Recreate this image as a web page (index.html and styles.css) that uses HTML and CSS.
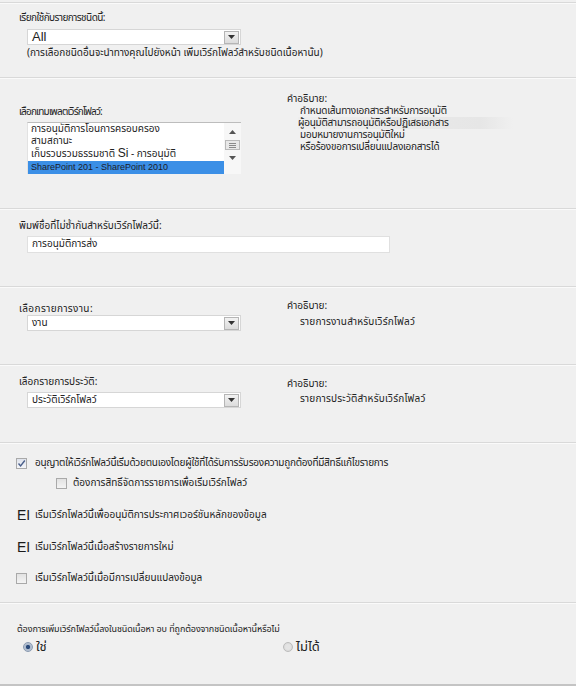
FILE: index.html
```html
<!DOCTYPE html>
<html lang="th">
<head>
<meta charset="utf-8">
<title>เพิ่มเวิร์กโฟลว์</title>
<link rel="stylesheet" href="styles.css">
</head>
<body>
<div class="page">
  <section class="sec s1">
    <div class="label narrow">เรียกใช้กับรายการชนิดนี้:</div>
    <div class="select">
      <span class="sel-text latin">All</span>
      <span class="arrow"><svg width="7" height="4" viewBox="0 0 7 4"><path d="M0 0H7L3.5 4Z" fill="#333"/></svg></span>
    </div>
    <div class="note">(การเลือกชนิดอื่นจะนำทางคุณไปยังหน้า เพิ่มเวิร์กโฟลว์สำหรับชนิดเนื้อหานั้น)</div>
  </section>

  <section class="sec s2 cols">
    <div class="left l2">
      <div class="label narrower">เลือกเทมเพลตเวิร์กโฟลว์:</div>
      <div class="listbox">
        <div class="items">
          <div class="item">การอนุมัติการโอนการครอบครอง</div>
          <div class="item">สามสถานะ</div>
          <div class="item i3">เก็บรวบรวมธรรมชาติ <span class="latin big">Si</span> - การอนุมัติ</div>
          <div class="item selected">SharePoint 201 - SharePoint 2010</div>
        </div>
        <div class="scroll">
          <svg width="7" height="4" viewBox="0 0 7 4"><path d="M3.5 0L7 4H0Z" fill="#555"/></svg>
          <span class="thumb"><i></i><i></i><i></i></span>
          <svg width="7" height="4" viewBox="0 0 7 4"><path d="M0 0H7L3.5 4Z" fill="#555"/></svg>
        </div>
      </div>
    </div>
    <div class="right r2">
      <div class="desc-title">คำอธิบาย:</div>
      <div class="desc tight">
        <div>กำหนดเส้นทางเอกสารสำหรับการอนุมัติ</div>
        <div class="hl">ผู้อนุมัติสามารถอนุมัติหรือปฏิเสธเอกสาร</div>
        <div>มอบหมายงานการอนุมัติใหม่</div>
        <div>หรือร้องขอการเปลี่ยนแปลงเอกสารได้</div>
      </div>
    </div>
  </section>

  <section class="sec s3">
    <div class="label">พิมพ์ชื่อที่ไม่ซ้ำกันสำหรับเวิร์กโฟลว์นี้:</div>
    <div class="input">การอนุมัติการส่ง</div>
  </section>

  <section class="sec s4 cols">
    <div class="left l4">
      <div class="label wide">เลือกรายการงาน:</div>
      <div class="select">
        <span class="sel-text">งาน</span>
        <span class="arrow"><svg width="7" height="4" viewBox="0 0 7 4"><path d="M0 0H7L3.5 4Z" fill="#333"/></svg></span>
      </div>
    </div>
    <div class="right r4">
      <div class="desc-title">คำอธิบาย:</div>
      <div class="desc spaced">รายการงานสำหรับเวิร์กโฟลว์</div>
    </div>
  </section>

  <section class="sec s5 cols">
    <div class="left l5">
      <div class="label">เลือกรายการประวัติ:</div>
      <div class="select">
        <span class="sel-text">ประวัติเวิร์กโฟลว์</span>
        <span class="arrow"><svg width="7" height="4" viewBox="0 0 7 4"><path d="M0 0H7L3.5 4Z" fill="#333"/></svg></span>
      </div>
    </div>
    <div class="right r5">
      <div class="desc-title">คำอธิบาย:</div>
      <div class="desc spaced">รายการประวัติสำหรับเวิร์กโฟลว์</div>
    </div>
  </section>

  <section class="sec s6">
    <div class="row r-a">
      <span class="cb checked"><svg width="9" height="9" viewBox="0 0 9 9"><path d="M1.5 4.5L3.6 7L7.8 1.5" fill="none" stroke="#4a5f8a" stroke-width="1.4"/></svg></span>
      <span class="txt tight">อนุญาตให้เวิร์กโฟลว์นี้เริ่มด้วยตนเองโดยผู้ใช้ที่ได้รับการรับรองความถูกต้องที่มีสิทธิ์แก้ไขรายการ</span>
    </div>
    <div class="row r-b sub">
      <span class="cb"></span>
      <span class="txt">ต้องการสิทธิ์จัดการรายการเพื่อเริ่มเวิร์กโฟลว์</span>
    </div>
    <div class="row r-c">
      <span class="ei">EI</span>
      <span class="txt">เริ่มเวิร์กโฟลว์นี้เพื่ออนุมัติการประกาศเวอร์ชันหลักของข้อมูล</span>
    </div>
    <div class="row r-d">
      <span class="ei">EI</span>
      <span class="txt">เริ่มเวิร์กโฟลว์นี้เมื่อสร้างรายการใหม่</span>
    </div>
    <div class="row r-e">
      <span class="cb"></span>
      <span class="txt">เริ่มเวิร์กโฟลว์นี้เมื่อมีการเปลี่ยนแปลงข้อมูล</span>
    </div>
  </section>

  <section class="sec s7">
    <div class="question">ต้องการเพิ่มเวิร์กโฟลว์นี้ลงในชนิดเนื้อหา อบ ที่ถูกต้องจากชนิดเนื้อหานี้หรือไม่</div>
    <div class="radios">
      <label class="radio-opt"><span class="radio on"></span><span class="rtxt">ใช่</span></label>
      <label class="radio-opt"><span class="radio"></span><span class="rtxt">ไม่ได้</span></label>
    </div>
  </section>
</div>
</body>
</html>
```

FILE: styles.css
```css
* { box-sizing: border-box; }
html, body { margin: 0; padding: 0; }
body {
  background: #f0f0f0;
  font-family: "Noto Sans Thai", Tahoma, "Noto Sans", "DejaVu Sans", sans-serif;
  font-size: 10px;
  color: #222;
  width: 576px;
  height: 686px;
  overflow: hidden;
}
.page {
  padding-top: 2px;
  height: 686px;
  border-bottom: 2px solid #c4c4c4;
}
.sec {
  border-top: 1px solid #d9d9d9;
  box-shadow: inset 0 1px 0 #fafafa;
}
.s1 { height: 75px; padding: 8px 0 0 19px; }
.s2 { height: 131px; }
.s3 { height: 78px; padding: 10px 0 0 19px; }
.s4 { height: 78px; }
.s5 { height: 78px; }
.s6 { height: 160px; padding: 12px 0 0 16px; }
.s7 { height: 82px; padding: 19px 0 0 17px; }

.cols { display: grid; grid-template-columns: 287px 1fr; }
.left { padding-left: 19px; }
.l2 { padding-top: 28px; }
.r2 { padding-top: 15px; }
.l4 { padding-top: 16px; }
.r4 { padding-top: 13px; }
.l5 { padding-top: 11px; }
.r5 { padding-top: 13px; }

.label { line-height: 14px; height: 14px; white-space: nowrap; }
.cols .label { line-height: 12px; height: 12px; }
.s1 .label { margin-bottom: 4px; }
.l2 .label { margin-bottom: 4px; }
.l5 .label { margin-bottom: 4px; }
.s3 .label { margin-bottom: 3px; }
.narrow { letter-spacing: -0.55px; }
.narrower { letter-spacing: -0.8px; }
.wide { letter-spacing: 0.4px; }
.spaced { letter-spacing: 0.2px; }
.tight { letter-spacing: -0.25px; }

.select {
  margin-left: 8px;
  width: 214px;
  height: 16px;
  background: #fff;
  border: 1px solid #d6d6d6;
  display: flex;
  align-items: center;
  justify-content: space-between;
  padding-left: 4px;
}
.sel-text { line-height: 14px; white-space: nowrap; }
.latin { font-family: "Liberation Sans", Arial, sans-serif; font-size: 13px; }
.big { font-size: 12px; }
.arrow {
  width: 15px;
  height: 13px;
  margin-right: 1px;
  border: 1px solid #b5b5b5;
  background: linear-gradient(#f2f2f2, #dcdcdc);
  display: flex;
  align-items: center;
  justify-content: center;
}
.note { margin: 1px 0 0 8px; line-height: 14px; white-space: nowrap; }

.listbox {
  margin-left: 8px;
  width: 214px;
  height: 52px;
  background: #fff;
  border-top: 1px solid #bdbdbd;
  border-left: 1px solid #e2e2e2;
  display: flex;
}
.items { flex: 1; display: flex; flex-direction: column; }
.item { height: 12px; line-height: 12px; padding-left: 3px; white-space: nowrap; }
.item.i3 { height: 13px; line-height: 13px; }
.item.selected {
  margin-top: 1px;
  height: 13px;
  line-height: 13px;
  background: #3b8fe6;
  color: #1b1b2b;
  font-family: "Liberation Sans", Arial, sans-serif;
  font-size: 9px;
}
.scroll {
  width: 17px;
  background: #f7f7f7;
  display: flex;
  flex-direction: column;
  align-items: center;
  padding-top: 7px;
  gap: 6px;
}
.thumb {
  width: 15px;
  height: 10px;
  border: 1px solid #b9b9b9;
  background: #e8e8e8;
  display: flex;
  flex-direction: column;
  align-items: center;
  justify-content: center;
  gap: 1px;
}
.thumb i { display: block; width: 7px; height: 1px; background: #8a8a8a; }

.desc-title { line-height: 12px; height: 12px; }
.r4 .desc-title { margin-bottom: 4px; }
.r5 .desc-title { margin-bottom: 3px; }
.desc { padding-left: 13px; line-height: 12px; white-space: nowrap; }
.desc .hl { margin-left: -2px; background: linear-gradient(90deg, #ededed, #e6e6e6 85%, #f0f0f0); width: 215px; }

.input {
  margin-left: 8px;
  width: 363px;
  height: 17px;
  background: #fff;
  border: 1px solid #e0e0e0;
  line-height: 15px;
  padding-left: 4px;
}

.row { display: flex; align-items: center; height: 16px; white-space: nowrap; }
.r-b { margin-top: 4px; padding-left: 40px; }
.r-c { margin-top: 16px; }
.r-d { margin-top: 16px; }
.r-e { margin-top: 15px; }
.cb {
  width: 11px;
  height: 11px;
  border: 1px solid #a9a9a9;
  background: linear-gradient(#e2e2e2, #f4f4f4);
  margin-right: 8px;
  display: flex;
  align-items: center;
  justify-content: center;
}
.cb.checked { background: linear-gradient(#dfe3ec, #f4f5f8); }
.sub .cb { margin-right: 6px; }
.ei {
  font-family: "Liberation Sans", Arial, sans-serif;
  font-size: 14px;
  width: 19px;
  padding-left: 1px;
  color: #1a1a1a;
}
.txt { line-height: 14px; }

.question { line-height: 14px; white-space: nowrap; font-size: 9px; letter-spacing: -0.1px; }
.radios { margin-top: 3px; display: grid; grid-template-columns: 260px 1fr; padding-left: 6px; }
.radio-opt { display: flex; align-items: center; height: 16px; }
.radio {
  width: 10px;
  height: 10px;
  border-radius: 50%;
  border: 1px solid #bcbcbc;
  background: radial-gradient(circle, #e4e4e4 40%, #d0d0d0 100%);
  margin-right: 3px;
}
.radio.on {
  border-color: #8a9ab0;
  background: radial-gradient(circle, #2b4a7a 0, #2b4a7a 30%, #aab8cc 45%, #c8d0dc 100%);
}
.rtxt { font-size: 13px; line-height: 14px; }
```
